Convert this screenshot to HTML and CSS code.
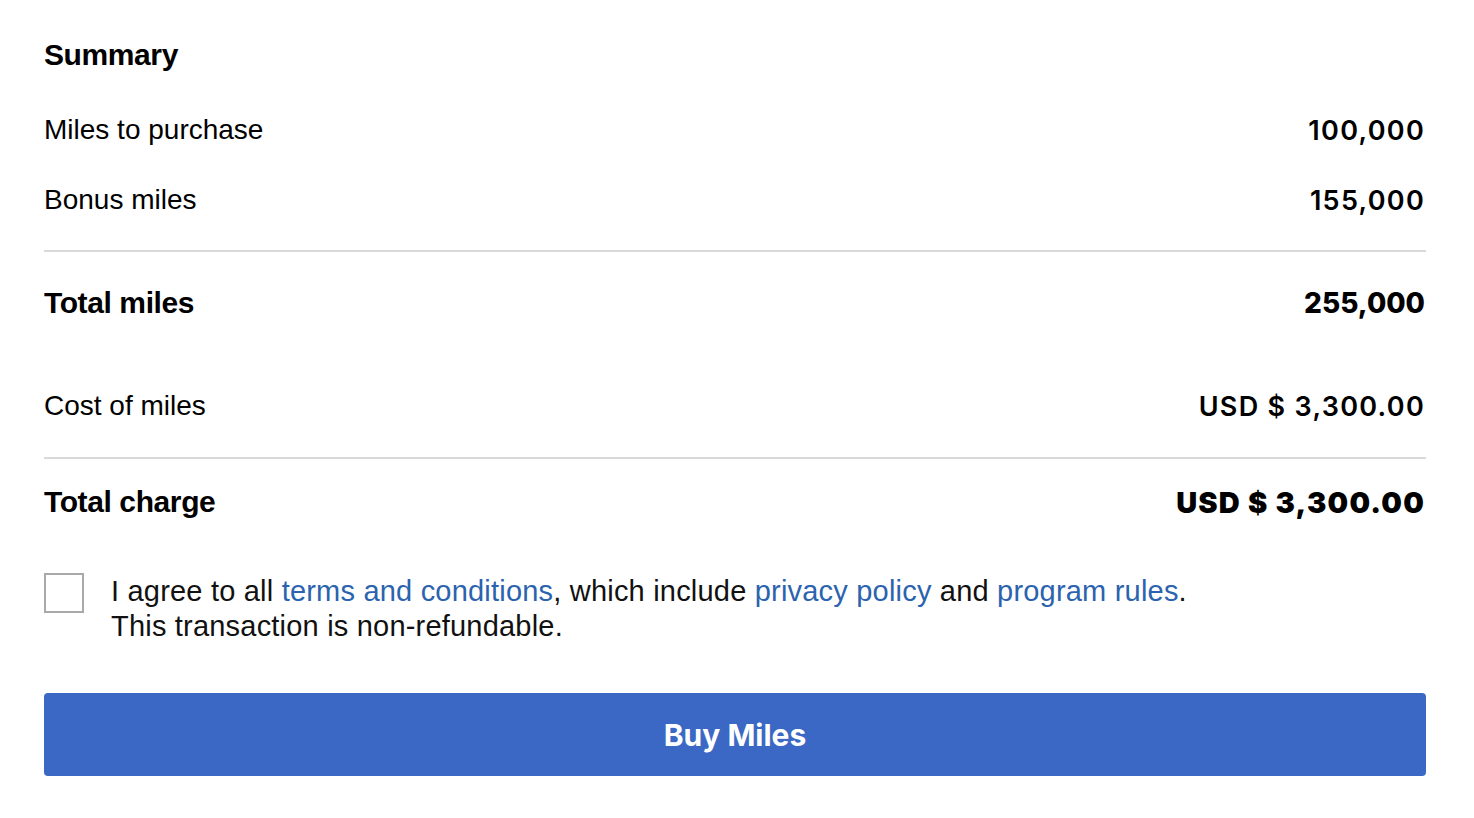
FILE: index.html
```html
<!DOCTYPE html>
<html>
<head>
<meta charset="utf-8">
<link rel="stylesheet" href="styles.css">
</head>
<body>
<main class="summary">
  <h2 class="title">Summary</h2>
  <section class="items">
    <div class="row row-sm"><span class="label">Miles to purchase</span><span class="num">100,000</span></div>
    <div class="row row-sm"><span class="label">Bonus miles</span><span class="num">155,000</span></div>
  </section>
  <hr class="divider">
  <div class="row row-total"><span class="label strong">Total miles</span><span class="num strong">255,000</span></div>
  <div class="row row-cost"><span class="label">Cost of miles</span><span class="num">USD $ 3,300.00</span></div>
  <hr class="divider">
  <div class="row row-charge"><span class="label strong">Total charge</span><span class="num heavy">USD $ 3,300.00</span></div>
  <label class="agree">
    <span class="box"></span>
    <span class="agree-text">I agree to all <a href="#">terms and conditions</a>, which include <a href="#">privacy policy</a> and <a href="#">program rules</a>.<br>This transaction is non-refundable.</span>
  </label>
  <button class="buy">Buy Miles</button>
</main>
</body>
</html>
```
FILE: styles.css
```css
html, body { margin: 0; padding: 0; background: #fff; }
body { font-family: "Liberation Sans", Arial, sans-serif; color: #000; }
.summary { padding: 36px 50px 0 44px; }
.title { margin: 0; font-size: 30px; font-weight: 700; line-height: 38px; letter-spacing: -0.4px; }
.items { margin-top: 21px; padding-bottom: 15px; }
.row { display: flex; justify-content: space-between; align-items: center; box-sizing: border-box; }
.row-sm { height: 70px; }
.label { font-size: 28px; }
.num { font-family: Inter, sans-serif; font-size: 27px; font-weight: 600; letter-spacing: 1.3px; margin-right: -1px; }
.label.strong { font-size: 30px; font-weight: 700; letter-spacing: -0.4px; }
.num.strong { font-weight: 800; font-size: 28px; letter-spacing: 0; }
.num.heavy { font-weight: 900; font-size: 29px; letter-spacing: 1.2px; }
.divider { border: 0; border-top: 2px solid #d9d9d9; margin: 0 -2px 0 0; }
.row-total { height: 101px; }
.row-cost { height: 104px; padding-top: 2px; }
.row-charge { height: 86px; }
.agree { display: flex; gap: 27px; align-items: flex-start; margin-top: 28px; }
.box { width: 36px; height: 36px; border: 2px solid #a9a9a9; flex: none; }
.agree-text { font-size: 29px; line-height: 35px; padding-top: 1px; color: #111; letter-spacing: 0.2px; }
.agree-text a { color: #2b63ae; text-decoration: none; }
.buy { display: block; width: calc(100% + 2px); height: 83px; margin-top: 49px; background: #3b68c4; color: #fff; border: 0; border-radius: 4px; font-family: Inter, sans-serif; font-weight: 700; font-size: 30px; }
```
